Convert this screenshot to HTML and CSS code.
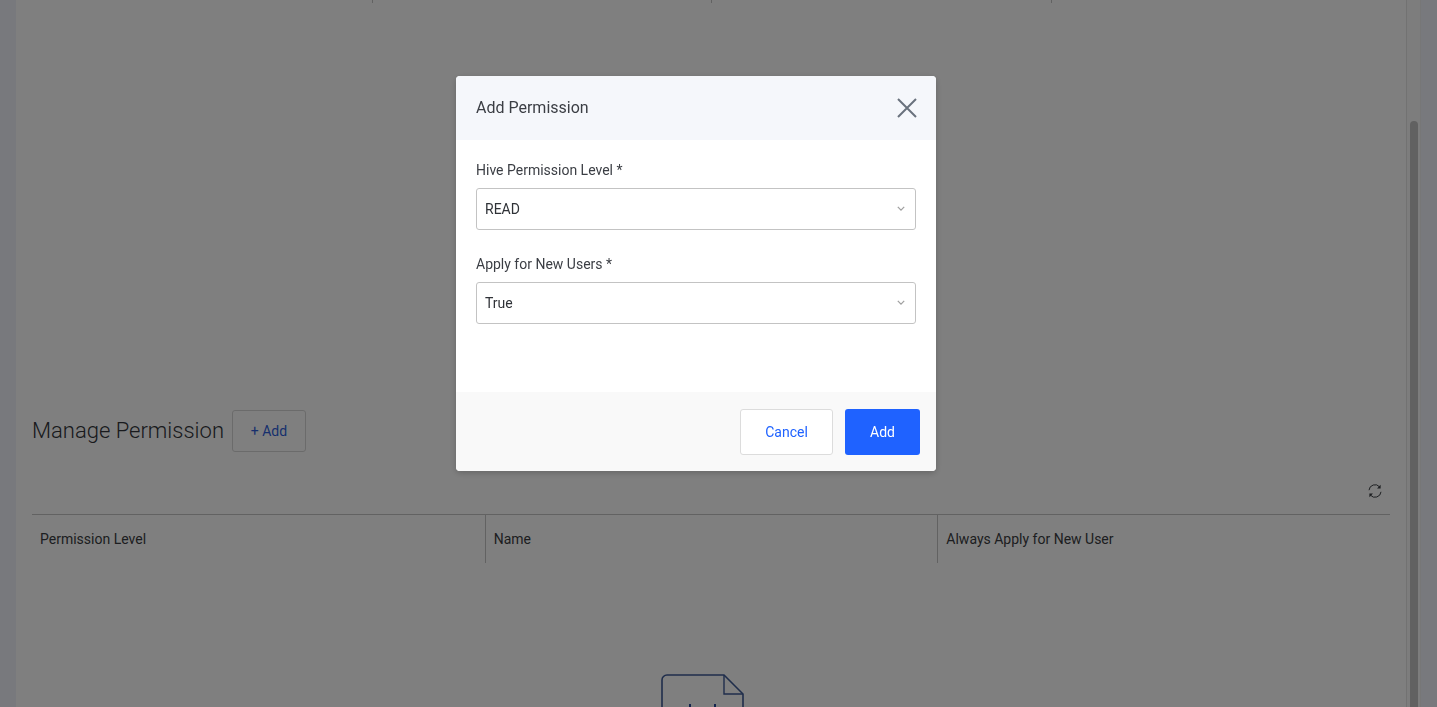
FILE: index.html
```html
<!DOCTYPE html>
<html lang="en">
<head>
<meta charset="utf-8">
<title>Add Permission</title>
<link rel="stylesheet" href="styles.css">
</head>
<body>
<div class="app">
  <main class="panel">
    <div class="ticks"><span></span><span></span><span></span><span></span></div>
    <section class="manage">
      <div class="manage-head">
        <h2>Manage Permission</h2>
        <button class="btn-outline" type="button">+ Add</button>
      </div>
      <div class="toolbar">
        <svg class="refresh" width="16" height="16" viewBox="0 0 16 16" fill="none" aria-hidden="true">
          <path d="M2 7.2A6 6 0 0 1 12.6 3.9" stroke="#3c3f44" stroke-width="1"/>
          <path d="M14 8.8A6 6 0 0 1 3.4 12.1" stroke="#3c3f44" stroke-width="1"/>
          <path d="M13.6 1.8v3.6H10z" fill="#3c3f44"/>
          <path d="M2.4 14.2v-3.6H6z" fill="#3c3f44"/>
        </svg>
      </div>
      <div class="table-head">
        <div class="th">Permission Level</div>
        <div class="th">Name</div>
        <div class="th">Always Apply for New User</div>
      </div>
      <div class="empty">
        <svg width="84" height="60" viewBox="0 0 84 60" fill="none" aria-hidden="true">
          <path d="M1 60V6a5 5 0 0 1 5-5h57l19 19v40" stroke="#3f5b97" stroke-width="1.6"/>
          <path d="M63 1v19h19" stroke="#3f5b97" stroke-width="1.4"/>
          <path d="M29 30v6M54 30v6" stroke="#27489a" stroke-width="2"/>
        </svg>
      </div>
    </section>
  </main>
  <div class="scroll-track"><div class="scroll-thumb"></div></div>
</div>

<div class="backdrop">
  <div class="modal" role="dialog" aria-label="Add Permission">
    <header class="modal-head">
      <span class="modal-title">Add Permission</span>
      <svg class="close" width="20" height="20" viewBox="0 0 20 20" fill="none" aria-hidden="true">
        <path d="M1 1l18 18M19 1L1 19" stroke="#69727d" stroke-width="2"/>
      </svg>
    </header>
    <div class="modal-body">
      <label class="field">
        <span class="field-label">Hive Permission Level *</span>
        <span class="select">READ
          <svg class="chevron" width="8" height="5" viewBox="0 0 10 6" fill="none" aria-hidden="true"><path d="M1 1l4 4 4-4" stroke="#a0a0a0" stroke-width="1.6"/></svg>
        </span>
      </label>
      <label class="field">
        <span class="field-label">Apply for New Users *</span>
        <span class="select">True
          <svg class="chevron" width="8" height="5" viewBox="0 0 10 6" fill="none" aria-hidden="true"><path d="M1 1l4 4 4-4" stroke="#a0a0a0" stroke-width="1.6"/></svg>
        </span>
      </label>
    </div>
    <footer class="modal-foot">
      <button class="btn btn-cancel" type="button">Cancel</button>
      <button class="btn btn-primary" type="button">Add</button>
    </footer>
  </div>
</div>
</body>
</html>
```

FILE: styles.css
```css
* { box-sizing: border-box; }

html, body {
  margin: 0;
  height: 100%;
  overflow: hidden;
}

body {
  font-family: Roboto, "Liberation Sans", sans-serif;
  font-size: 14px;
  color: #2f3237;
  background: #f0f3fa;
}

.app {
  display: flex;
  height: 707px;
  padding: 0 16px;
  overflow: hidden;
}

.panel {
  width: 1391px;
  flex: none;
  background: #fff;
  border-right: 1px solid #e4e4e4;
  padding: 0 16px;
}

.ticks {
  display: grid;
  grid-template-columns: repeat(4, 1fr);
  height: 3px;
}

.ticks span { border-left: 1px solid #c4c4c4; }
.ticks span:first-child { border-left: 0; }

.manage { padding-top: 407px; }

.manage-head {
  display: flex;
  align-items: center;
  gap: 8px;
  height: 42px;
}

.manage-head h2 {
  margin: 0;
  padding-bottom: 2px;
  font-size: 22px;
  font-weight: 300;
  color: #32353a;
}

.btn-outline {
  width: 74px;
  height: 42px;
  border: 1px solid #d6d6d6;
  border-radius: 3px;
  background: #fff;
  color: #2f5fdb;
  font: 400 14px Roboto, sans-serif;
}

.toolbar {
  display: flex;
  justify-content: flex-end;
  align-items: center;
  height: 62px;
  padding: 16px 7px 0 0;
}

.table-head {
  display: grid;
  grid-template-columns: repeat(3, 1fr);
  height: 49px;
  border-top: 1px solid #c4c4c4;
}

.th {
  display: flex;
  align-items: center;
  padding-left: 8px;
  color: #3a3d42;
}

.th + .th { border-left: 1px solid #c4c4c4; }

.empty {
  display: flex;
  justify-content: center;
  padding: 111px 17px 0 0;
}

.scroll-track {
  position: relative;
  width: 14px;
  flex: none;
  background: #fafafa;
  border-right: 1px solid #eee;
}

.scroll-thumb {
  position: absolute;
  left: 3px;
  right: 2px;
  top: 121px;
  bottom: -20px;
  border-radius: 4px;
  background: #c2c2c2;
}

.backdrop {
  position: fixed;
  inset: 0;
  background: rgba(0, 0, 0, .5);
}

.modal {
  position: absolute;
  left: 456px;
  top: 76px;
  width: 480px;
  border-radius: 4px;
  overflow: hidden;
  background: #fff;
  box-shadow: 0 2px 6px rgba(0, 0, 0, .2);
}

.modal-head {
  display: flex;
  align-items: center;
  justify-content: space-between;
  height: 64px;
  padding: 0 19px 0 20px;
  background: #f5f7fb;
}

.modal-title {
  padding-bottom: 2px;
  font-size: 16px;
  color: #3b3e44;
}

.modal-body {
  height: 252px;
  padding: 20px 20px 0;
}

.field {
  display: block;
  margin-bottom: 24px;
}

.field-label {
  display: block;
  height: 28px;
  line-height: 20px;
  color: #3b3e44;
}

.select {
  display: flex;
  align-items: center;
  justify-content: space-between;
  height: 42px;
  padding: 0 10px 0 8px;
  border: 1px solid #c3c3c3;
  border-radius: 3px;
  color: #2f3237;
}

.chevron { margin-bottom: 1px; }

.modal-foot {
  display: flex;
  justify-content: flex-end;
  gap: 12px;
  height: 79px;
  padding: 17px 16px 0 0;
  background: #f9f9f9;
}

.btn {
  height: 46px;
  border-radius: 3px;
  font: 400 14px Roboto, sans-serif;
}

.btn-cancel {
  width: 93px;
  border: 1px solid #dcdcdc;
  background: #fff;
  color: #1f62ff;
}

.btn-primary {
  width: 75px;
  border: 0;
  background: #1f62ff;
  color: #fff;
}
```
